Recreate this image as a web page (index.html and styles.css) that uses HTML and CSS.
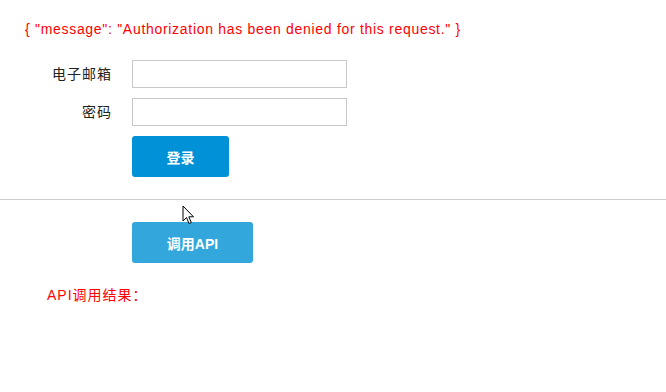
FILE: index.html
```html
<!DOCTYPE html>
<html>
<head>
<meta charset="utf-8">
<link rel="stylesheet" href="styles.css">
</head>
<body>
<div class="msg">{ "message": "Authorization has been denied for this request." }</div>
<div class="form">
  <label class="lbl">电子邮箱</label>
  <input class="inp" type="text">
  <label class="lbl">密码</label>
  <input class="inp" type="password">
  <span></span>
  <div><button class="btn btn-login">登录</button></div>
</div>
<div class="rule"></div>
<div class="api">
  <button class="btn btn-api">调用API</button>
</div>
<div class="result">API调用结果：</div>
<svg class="cursor" width="14" height="20" viewBox="0 0 14 20"><path d="M1 1 L1 16 L4.5 12.5 L7 18.5 L9.3 17.5 L6.8 11.8 L11.5 11.8 Z" fill="#fff" stroke="#000" stroke-width="1" stroke-linejoin="miter"/></svg>
</body>
</html>
```
FILE: styles.css
```css
html, body { margin: 0; padding: 0; background: #fff; }
body {
  font-family: "Liberation Sans", Arial, "Noto Sans CJK SC", sans-serif;
  font-size: 14px;
  color: #333;
  position: relative;
  width: 666px;
  height: 392px;
  overflow: hidden;
}
.msg {
  color: #ff0000;
  padding: 21px 0 0 25px;
  line-height: 16px;
  height: 16px;
  letter-spacing: 0.7px;
}
.form {
  display: grid;
  grid-template-columns: 111px 215px;
  column-gap: 21px;
  row-gap: 10px;
  margin-top: 23px;
  align-items: center;
}
.lbl {
  text-align: right;
  color: #222;
  line-height: 16px;
  letter-spacing: 1px;
  margin-right: -1px;
}
.inp {
  box-sizing: border-box;
  width: 215px;
  height: 28px;
  border: 1px solid #c8c8c8;
  margin: 0;
  padding: 0 6px;
  outline: none;
}
.btn {
  border: none;
  border-radius: 3px;
  color: #fff;
  font-family: "Liberation Sans", Arial, "Noto Sans CJK SC", sans-serif;
  font-size: 14px;
  font-weight: bold;
  height: 41px;
  padding: 0;
  margin: 0;
  cursor: pointer;
}
.btn-login { width: 97px; background: #0091d6; display: block; }
.btn-api { width: 121px; background: #33a7dc; display: block; }
.rule {
  margin-top: 22px;
  height: 1px;
  background: #cccccc;
}
.api { padding: 22px 0 0 132px; }
.result {
  color: #ff0000;
  padding: 24px 0 0 47px;
  line-height: 16px;
  letter-spacing: 1px;
}
.cursor { position: absolute; left: 182px; top: 205px; }
```
